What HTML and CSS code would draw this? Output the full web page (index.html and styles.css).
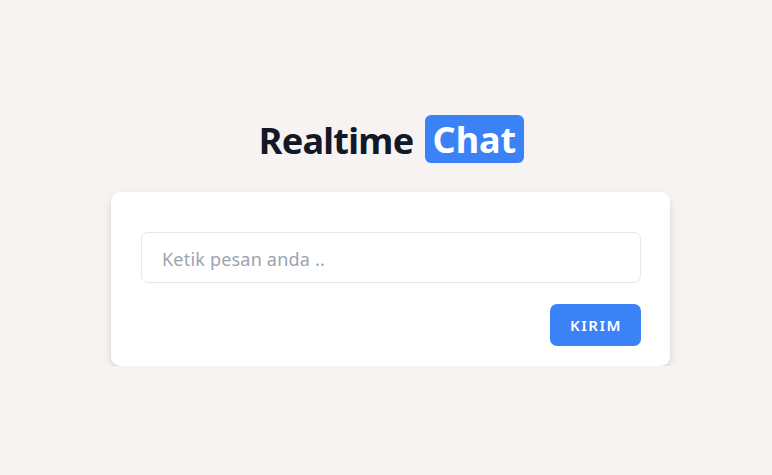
FILE: index.html
```html
<!DOCTYPE html>
<html lang="id">
<head>
<meta charset="utf-8">
<title>Realtime Chat</title>
<link rel="stylesheet" href="styles.css">
</head>
<body>
<main class="page">
  <div class="wrap">
    <h1 class="title"><span class="word">Realtime</span> <span class="badge">Chat</span></h1>
    <form class="card">
      <input class="field" type="text" placeholder="Ketik pesan anda ..">
      <div class="actions">
        <button class="send" type="button">Kirim</button>
      </div>
    </form>
  </div>
</main>
</body>
</html>
```
FILE: styles.css
```css
html, body {
  margin: 0;
  padding: 0;
}
body {
  background: #f7f3f2;
  font-family: "Noto Sans", "Open Sans", sans-serif;
  color: #111827;
}
.page {
  padding-top: 115px;
  padding-left: 111px;
}
.wrap {
  width: 559px;
}
.title {
  margin: 0 0 29px;
  height: 48px;
  display: flex;
  align-items: center;
  justify-content: center;
  gap: 11px;
  font-size: 36px;
  line-height: 40px;
  font-weight: 700;
  padding-left: 2px;
}
.word {
  letter-spacing: -0.7px;
  padding-top: 4px;
}
.badge {
  background: #3b82f6;
  color: #ffffff;
  border-radius: 6px;
  padding: 5px 8px 3px;
}
.card {
  margin: 0;
  background: #ffffff;
  border-radius: 9px;
  box-shadow: 0 4px 10px -1px rgba(0,0,0,0.14), 0 2px 4px -2px rgba(0,0,0,0.1);
  padding: 40px 29px 20px 30px;
  display: flex;
  flex-direction: column;
  gap: 21px;
}
.field {
  box-sizing: border-box;
  width: 100%;
  height: 51px;
  border: 1px solid #e5e7eb;
  border-radius: 7px;
  padding: 2px 20px 0;
  font-family: inherit;
  font-size: 18px;
  letter-spacing: 0.2px;
  color: #111827;
  outline: none;
  background: #fff;
}
.field::placeholder {
  color: #9ca3af;
}
.actions {
  display: flex;
  justify-content: flex-end;
}
.send {
  width: 91px;
  height: 42px;
  border: none;
  border-radius: 7px;
  background: #3b82f6;
  color: #ffffff;
  font-family: inherit;
  font-size: 15px;
  font-weight: 600;
  letter-spacing: 1.5px;
  text-transform: uppercase;
  padding: 0 0 0 1px;
  cursor: pointer;
}
```
